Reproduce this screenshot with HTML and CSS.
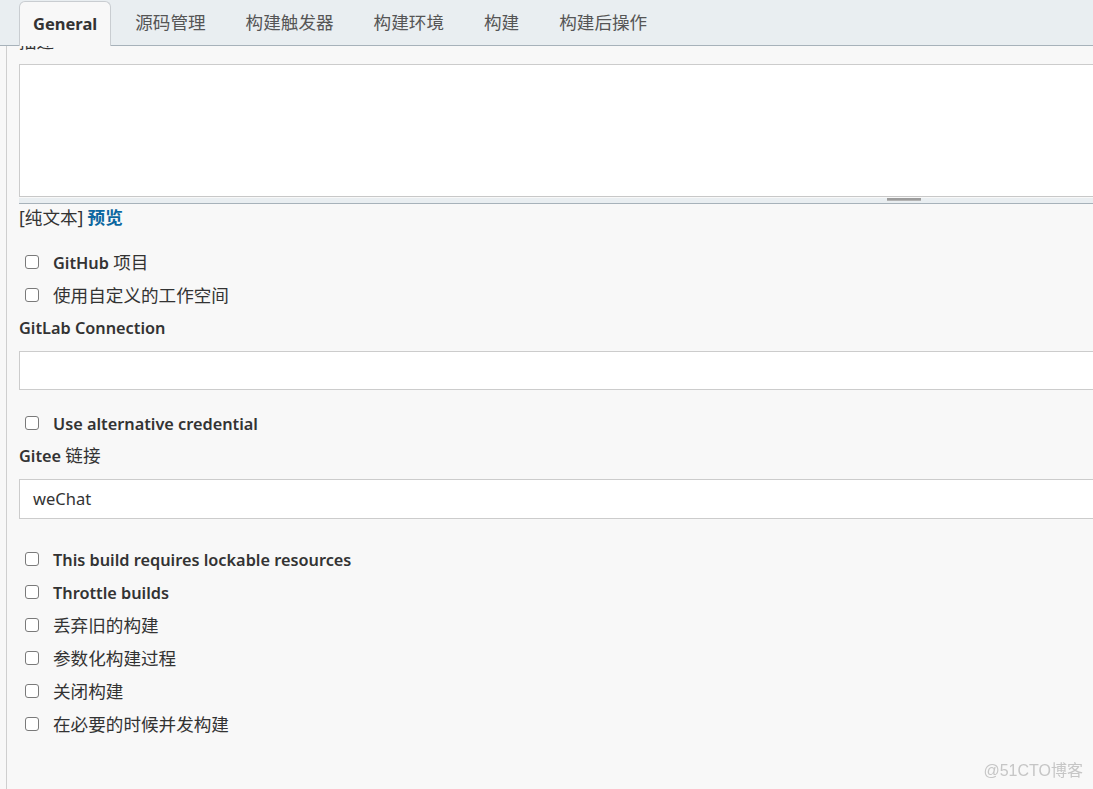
FILE: index.html
```html
<!DOCTYPE html>
<html lang="zh-CN">
<head>
  <meta charset="UTF-8">
  <title>General</title>
  <link rel="stylesheet" href="styles.css">
</head>
<body>

<div class="tabbar">
  <div class="tab active">General</div>
  <div class="tab">源码管理</div>
  <div class="tab">构建触发器</div>
  <div class="tab">构建环境</div>
  <div class="tab">构建</div>
  <div class="tab">构建后操作</div>
</div>

<div class="main">
  <div class="field-label desc-label"><span class="cjk">描述</span></div>
  <div class="textarea"></div>
  <div class="resize-bar"><div class="grip"></div></div>
  <div class="format"><span class="cjk">[纯文本]</span> <a href="#" class="preview">预览</a></div>

  <div class="rows first">
    <label class="check"><input type="checkbox"><span>GitHub <span class="cjk">项目</span></span></label>
    <label class="check"><input type="checkbox"><span class="cjk">使用自定义的工作空间</span></label>
  </div>

  <div class="field-label">GitLab Connection</div>
  <div class="input"></div>

  <div class="rows after-input">
    <label class="check"><input type="checkbox"><span>Use alternative credential</span></label>
  </div>

  <div class="field-label">Gitee <span class="cjk">链接</span></div>
  <div class="input tall">weChat</div>

  <div class="rows options">
    <label class="check"><input type="checkbox"><span>This build requires lockable resources</span></label>
    <label class="check"><input type="checkbox"><span>Throttle builds</span></label>
    <label class="check"><input type="checkbox"><span class="cjk">丢弃旧的构建</span></label>
    <label class="check"><input type="checkbox"><span class="cjk">参数化构建过程</span></label>
    <label class="check"><input type="checkbox"><span class="cjk">关闭构建</span></label>
    <label class="check"><input type="checkbox"><span class="cjk">在必要的时候并发构建</span></label>
  </div>
</div>

<div class="watermark">@51CTO博客</div>

</body>
</html>
```

FILE: styles.css
```css
html, body {
  margin: 0;
  height: 100%;
  overflow: hidden;
}

body {
  font-family: "Noto Sans", "Noto Sans CJK SC", sans-serif;
  font-size: 16.3px;
  color: #333;
  background: #f8f8f8;
}

.tabbar {
  position: relative;
  z-index: 1;
  display: flex;
  gap: 12px;
  height: 45px;
  padding-left: 19px;
  background: #e9eef1;
  border-bottom: 1px solid #a7b2ba;
}

.tab {
  padding: 0 14px;
  line-height: 44px;
  color: #555;
  font-size: 17.6px;
}

.tab.active {
  margin-top: 1px;
  margin-bottom: -1px;
  margin-right: -2px;
  background: #f8f8f8;
  border: 1px solid #c9cdd1;
  border-bottom: none;
  border-radius: 6px 6px 0 0;
  color: #333;
  font-weight: 700;
  font-size: 16.5px;
  padding: 0 13px;
}

.main {
  min-height: 100%;
  margin-left: 6px;
  padding-left: 12px;
  border-left: 1px solid #cfcfcf;
  width: calc(100% + 40px);
}

.field-label {
  font-weight: 600;
  line-height: 33px;
}

.cjk {
  font-weight: 400;
  font-size: 17.6px;
  line-height: 1;
}

.desc-label {
  line-height: 24px;
  margin-top: -16px;
}

.textarea {
  margin-top: 10px;
  height: 131px;
  background: #fff;
  border: 1px solid #cccccc;
  border-bottom-color: #c8c8c8;
}

.resize-bar {
  height: 5px;
  background: #e9eef1;
  border-bottom: 1px solid #a7b2ba;
  padding-left: 868px;
}

.grip {
  width: 34px;
  height: 3px;
  margin-top: 1px;
  background: #9c9c9c;
  border-bottom: 1px solid #b5b5b5;
  box-sizing: border-box;
}

.format {
  margin-top: 2px;
  line-height: 24px;
}

.preview {
  color: #0b67a0;
  font-weight: 700;
  font-size: 17.6px;
  line-height: 1;
  text-decoration: none;
}

.rows {
  display: flex;
  flex-direction: column;
}

.rows.first {
  margin-top: 16px;
}

.rows.after-input {
  margin-top: 17px;
}

.rows.options {
  margin-top: 24px;
}

.check {
  display: flex;
  align-items: center;
  height: 33px;
  font-weight: 600;
}

.check input {
  appearance: none;
  width: 14px;
  height: 14px;
  margin: 0 14px 0 6px;
  background: #fff;
  border: 1px solid #7a7a7a;
  border-radius: 3px;
  flex: none;
  position: relative;
  top: -1px;
}

.input {
  margin-top: 6px;
  height: 37px;
  background: #fff;
  border: 1px solid #cccccc;
}

.input.tall {
  height: 38px;
  line-height: 38px;
  padding-left: 13px;
  font-size: 16.5px;
  color: #333;
}

.watermark {
  position: fixed;
  right: 10px;
  bottom: 8px;
  font-family: "Liberation Sans", "Noto Sans CJK SC", sans-serif;
  font-size: 16px;
  color: #c6c6c6;
}
```
